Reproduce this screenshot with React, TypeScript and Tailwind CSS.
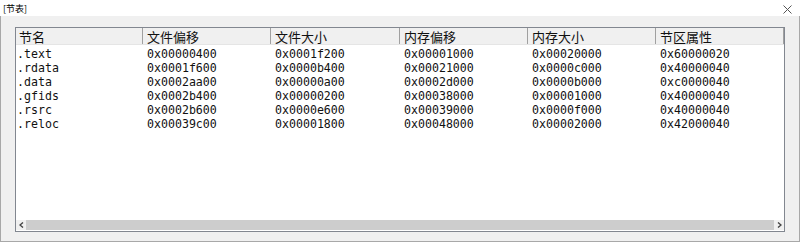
const columns = ["节名", "文件偏移", "文件大小", "内存偏移", "内存大小", "节区属性"];

const sections = [
  [".text", "0x00000400", "0x0001f200", "0x00001000", "0x00020000", "0x60000020"],
  [".rdata", "0x0001f600", "0x0000b400", "0x00021000", "0x0000c000", "0x40000040"],
  [".data", "0x0002aa00", "0x00000a00", "0x0002d000", "0x0000b000", "0xc0000040"],
  [".gfids", "0x0002b400", "0x00000200", "0x00038000", "0x00001000", "0x40000040"],
  [".rsrc", "0x0002b600", "0x0000e600", "0x00039000", "0x0000f000", "0x40000040"],
  [".reloc", "0x00039c00", "0x00001800", "0x00048000", "0x00002000", "0x42000040"],
];

const widths = ["w-[127px]", "w-[128px]", "w-[129px]", "w-[128px]", "w-[128px]", "flex-1"];

export default function App() {
  return (
    <div className="w-[800px] h-[242px] flex flex-col bg-white text-black">
      {/* title bar */}
      <div className="h-[16px] flex items-center justify-between pl-[3px] pr-[8px] bg-white">
        <span className="text-[9px] leading-none mt-[1px] font-['Noto_Sans_CJK_SC',sans-serif]">[节表]</span>
        <svg width="9" height="9" viewBox="0 0 9 9" className="mt-[2px]">
          <path d="M0.5 0.5 L8.5 8.5 M8.5 0.5 L0.5 8.5" stroke="#555" strokeWidth="1" />
        </svg>
      </div>

      {/* body */}
      <div className="flex-1 flex flex-col bg-[#f0f0f0] border-x border-b border-[#a8a8a8] pl-[14px] pr-[14px] pt-[11px] pb-[9px]">
        <div className="flex-1 flex flex-col bg-white border border-[#828790]">
          {/* header */}
          <div className="h-[17px] flex bg-[#f0f0f0] border-b border-[#e5e5e5]">
            {columns.map((c, i) => (
              <div
                key={c}
                className={`${widths[i]} h-full flex items-center border-r border-[#a0a0a0] ${i === 0 ? "pl-[3px]" : "pl-[4px]"} text-[13px] leading-none text-[#111] font-['Noto_Sans_CJK_SC',sans-serif]`}
              >
                {c}
              </div>
            ))}
          </div>

          {/* rows */}
          <div className="flex-1 flex flex-col pt-[2px] font-['DejaVu_Sans_Mono',monospace] text-[11.6px] leading-[14px] text-[#111]">
            {sections.map((r) => (
              <div key={r[0]} className="h-[14px] flex">
                {r.map((v, i) => (
                  <div key={i} className={`${widths[i]} ${i === 0 ? "pl-[1px]" : "pl-[4px]"} whitespace-nowrap`}>
                    {v}
                  </div>
                ))}
              </div>
            ))}
          </div>

          {/* horizontal scrollbar */}
          <div className="h-[10px] mb-[1px] flex items-center bg-[#cdcdcd]">
            <div className="w-[10px] h-full bg-[#f0f0f0] flex items-center justify-center">
              <svg width="5" height="6" viewBox="0 0 5 6">
                <path d="M4 0.5 L1 3 L4 5.5" stroke="#444" strokeWidth="1.4" fill="none" />
              </svg>
            </div>
            <div className="flex-1" />
            <div className="w-[10px] h-full bg-[#f0f0f0] flex items-center justify-center">
              <svg width="5" height="6" viewBox="0 0 5 6">
                <path d="M1 0.5 L4 3 L1 5.5" stroke="#444" strokeWidth="1.4" fill="none" />
              </svg>
            </div>
          </div>
        </div>
      </div>
    </div>
  );
}
